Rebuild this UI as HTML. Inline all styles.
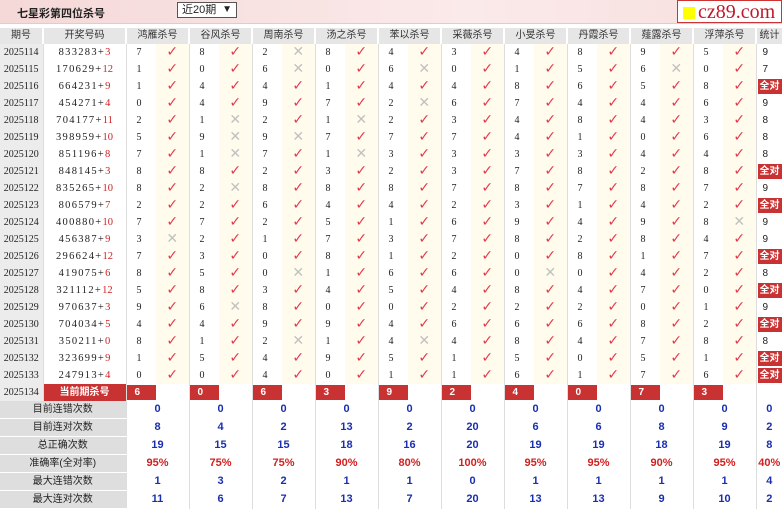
<!DOCTYPE html>
<html><head><meta charset="utf-8"><style>
*{margin:0;padding:0;box-sizing:border-box}
body{width:782px;height:502px;overflow:hidden;background:#fff;font-family:"Liberation Sans","Noto Sans CJK SC",sans-serif;font-size:10px;color:#222;position:relative}
.bar{position:absolute;left:0;top:0;width:782px;height:24px;background:linear-gradient(90deg,#f5d8d8,#fbeaea 60%,#f7dede);border-bottom:1px solid #e8c8c8}
.title{position:absolute;left:17px;top:5px;font-size:11px;font-weight:bold;color:#222}
.sel{position:absolute;left:177px;top:2px;width:60px;height:16px;border:1px solid #555;background:#fff;font-size:11px;padding-left:4px;line-height:14px}
.sel b{position:absolute;right:4px;top:0;font-size:10px}
.logo{position:absolute;left:677px;top:0;width:105px;height:23px;background:#fff;border:1px solid #c33;}
.logo i{position:absolute;left:5px;top:6px;width:12px;height:12px;background:#ff0}
.logo span{position:absolute;left:20px;top:0;font-family:"Liberation Serif",serif;font-size:20px;color:#c0182a;line-height:22px}
table{position:absolute;left:0;top:28px;border-collapse:collapse;table-layout:fixed;width:782px}
td{height:17px;padding:0;white-space:nowrap;overflow:hidden;line-height:17px}
th{height:16px;background:#e6e6e6;font-weight:normal;color:#333;font-size:10px;border-left:2px solid #fff;line-height:16px}
td.p{background:#ececec;font-family:"Liberation Serif",serif;font-size:10px;text-align:center;border-right:1px solid #ddd}
td.d{text-align:center;font-family:"Liberation Serif",serif;font-size:10.5px;letter-spacing:1.3px}
td.d em{font-style:normal;color:#d02020;letter-spacing:0}
td.n{padding-left:10px;border-left:1px solid #ddd;font-family:"Liberation Serif",serif}
td.k,td.x{background:#fffcee;text-align:center;font-family:"DejaVu Sans",sans-serif;font-size:14px}
td.k{color:#e23a4e}
td.x{color:#c0c0c0}
td.s{text-align:left;padding-left:6px;border-left:1px solid #ddd}
.q{display:inline-block;background:#c83232;color:#fff;font-weight:bold;font-size:10px;line-height:15px;padding:0 2px;margin-left:-5px}
td.cur{background:#c83232;color:#fff;font-weight:bold;text-align:center}
td.r{padding:1px 0 1px 0;border-left:1px solid #ddd}
td.r div{background:#c83232;color:#fff;font-weight:bold;height:15px;line-height:15px;padding-left:8px;width:32px}
td.e{border-left:0}
td.l{background:#dedede;text-align:center;border-bottom:1px solid #fff;color:#222}
td.v{text-align:center;color:#1a2fb0;font-weight:bold;font-size:11px;border-left:1px solid #ddd}
td.v.rd{color:#d22020}
</style></head><body>
<div class="bar"><div class="title">七星彩第四位杀号</div><div class="sel">近20期<b>▼</b></div><div class="logo"><i></i><span>cz89.com</span></div></div>
<table>
<colgroup><col style="width:43px"><col style="width:83px">
<col style="width:30px"><col style="width:33px"><col style="width:30px"><col style="width:33px"><col style="width:30px"><col style="width:33px"><col style="width:30px"><col style="width:33px"><col style="width:30px"><col style="width:33px"><col style="width:30px"><col style="width:33px"><col style="width:30px"><col style="width:33px"><col style="width:30px"><col style="width:33px"><col style="width:30px"><col style="width:33px"><col style="width:30px"><col style="width:33px"><col style="width:26px"></colgroup>
<tr><th style="border-left:0">期号</th><th>开奖号码</th><th colspan="2">鸿雁杀号</th><th colspan="2">谷风杀号</th><th colspan="2">周南杀号</th><th colspan="2">汤之杀号</th><th colspan="2">苯以杀号</th><th colspan="2">采薇杀号</th><th colspan="2">小旻杀号</th><th colspan="2">丹霞杀号</th><th colspan="2">薤露杀号</th><th colspan="2">浮萍杀号</th><th>统计</th></tr>
<tr><td class="p">2025114</td><td class="d">833283+<em>3</em></td><td class="n">7</td><td class="k">✓</td><td class="n">8</td><td class="k">✓</td><td class="n">2</td><td class="x">✕</td><td class="n">8</td><td class="k">✓</td><td class="n">4</td><td class="k">✓</td><td class="n">3</td><td class="k">✓</td><td class="n">4</td><td class="k">✓</td><td class="n">8</td><td class="k">✓</td><td class="n">9</td><td class="k">✓</td><td class="n">5</td><td class="k">✓</td><td class="s">9</td></tr>
<tr><td class="p">2025115</td><td class="d">170629+<em>12</em></td><td class="n">1</td><td class="k">✓</td><td class="n">0</td><td class="k">✓</td><td class="n">6</td><td class="x">✕</td><td class="n">0</td><td class="k">✓</td><td class="n">6</td><td class="x">✕</td><td class="n">0</td><td class="k">✓</td><td class="n">1</td><td class="k">✓</td><td class="n">5</td><td class="k">✓</td><td class="n">6</td><td class="x">✕</td><td class="n">0</td><td class="k">✓</td><td class="s">7</td></tr>
<tr><td class="p">2025116</td><td class="d">664231+<em>9</em></td><td class="n">1</td><td class="k">✓</td><td class="n">4</td><td class="k">✓</td><td class="n">4</td><td class="k">✓</td><td class="n">1</td><td class="k">✓</td><td class="n">4</td><td class="k">✓</td><td class="n">4</td><td class="k">✓</td><td class="n">8</td><td class="k">✓</td><td class="n">6</td><td class="k">✓</td><td class="n">5</td><td class="k">✓</td><td class="n">8</td><td class="k">✓</td><td class="s"><span class="q">全对</span></td></tr>
<tr><td class="p">2025117</td><td class="d">454271+<em>4</em></td><td class="n">0</td><td class="k">✓</td><td class="n">4</td><td class="k">✓</td><td class="n">9</td><td class="k">✓</td><td class="n">7</td><td class="k">✓</td><td class="n">2</td><td class="x">✕</td><td class="n">6</td><td class="k">✓</td><td class="n">7</td><td class="k">✓</td><td class="n">4</td><td class="k">✓</td><td class="n">4</td><td class="k">✓</td><td class="n">6</td><td class="k">✓</td><td class="s">9</td></tr>
<tr><td class="p">2025118</td><td class="d">704177+<em>11</em></td><td class="n">2</td><td class="k">✓</td><td class="n">1</td><td class="x">✕</td><td class="n">2</td><td class="k">✓</td><td class="n">1</td><td class="x">✕</td><td class="n">2</td><td class="k">✓</td><td class="n">3</td><td class="k">✓</td><td class="n">4</td><td class="k">✓</td><td class="n">8</td><td class="k">✓</td><td class="n">4</td><td class="k">✓</td><td class="n">3</td><td class="k">✓</td><td class="s">8</td></tr>
<tr><td class="p">2025119</td><td class="d">398959+<em>10</em></td><td class="n">5</td><td class="k">✓</td><td class="n">9</td><td class="x">✕</td><td class="n">9</td><td class="x">✕</td><td class="n">7</td><td class="k">✓</td><td class="n">7</td><td class="k">✓</td><td class="n">7</td><td class="k">✓</td><td class="n">4</td><td class="k">✓</td><td class="n">1</td><td class="k">✓</td><td class="n">0</td><td class="k">✓</td><td class="n">6</td><td class="k">✓</td><td class="s">8</td></tr>
<tr><td class="p">2025120</td><td class="d">851196+<em>8</em></td><td class="n">7</td><td class="k">✓</td><td class="n">1</td><td class="x">✕</td><td class="n">7</td><td class="k">✓</td><td class="n">1</td><td class="x">✕</td><td class="n">3</td><td class="k">✓</td><td class="n">3</td><td class="k">✓</td><td class="n">3</td><td class="k">✓</td><td class="n">3</td><td class="k">✓</td><td class="n">4</td><td class="k">✓</td><td class="n">4</td><td class="k">✓</td><td class="s">8</td></tr>
<tr><td class="p">2025121</td><td class="d">848145+<em>3</em></td><td class="n">8</td><td class="k">✓</td><td class="n">8</td><td class="k">✓</td><td class="n">2</td><td class="k">✓</td><td class="n">3</td><td class="k">✓</td><td class="n">2</td><td class="k">✓</td><td class="n">3</td><td class="k">✓</td><td class="n">7</td><td class="k">✓</td><td class="n">8</td><td class="k">✓</td><td class="n">2</td><td class="k">✓</td><td class="n">8</td><td class="k">✓</td><td class="s"><span class="q">全对</span></td></tr>
<tr><td class="p">2025122</td><td class="d">835265+<em>10</em></td><td class="n">8</td><td class="k">✓</td><td class="n">2</td><td class="x">✕</td><td class="n">8</td><td class="k">✓</td><td class="n">8</td><td class="k">✓</td><td class="n">8</td><td class="k">✓</td><td class="n">7</td><td class="k">✓</td><td class="n">8</td><td class="k">✓</td><td class="n">7</td><td class="k">✓</td><td class="n">8</td><td class="k">✓</td><td class="n">7</td><td class="k">✓</td><td class="s">9</td></tr>
<tr><td class="p">2025123</td><td class="d">806579+<em>7</em></td><td class="n">2</td><td class="k">✓</td><td class="n">2</td><td class="k">✓</td><td class="n">6</td><td class="k">✓</td><td class="n">4</td><td class="k">✓</td><td class="n">4</td><td class="k">✓</td><td class="n">2</td><td class="k">✓</td><td class="n">3</td><td class="k">✓</td><td class="n">1</td><td class="k">✓</td><td class="n">4</td><td class="k">✓</td><td class="n">2</td><td class="k">✓</td><td class="s"><span class="q">全对</span></td></tr>
<tr><td class="p">2025124</td><td class="d">400880+<em>10</em></td><td class="n">7</td><td class="k">✓</td><td class="n">7</td><td class="k">✓</td><td class="n">2</td><td class="k">✓</td><td class="n">5</td><td class="k">✓</td><td class="n">1</td><td class="k">✓</td><td class="n">6</td><td class="k">✓</td><td class="n">9</td><td class="k">✓</td><td class="n">4</td><td class="k">✓</td><td class="n">9</td><td class="k">✓</td><td class="n">8</td><td class="x">✕</td><td class="s">9</td></tr>
<tr><td class="p">2025125</td><td class="d">456387+<em>9</em></td><td class="n">3</td><td class="x">✕</td><td class="n">2</td><td class="k">✓</td><td class="n">1</td><td class="k">✓</td><td class="n">7</td><td class="k">✓</td><td class="n">3</td><td class="k">✓</td><td class="n">7</td><td class="k">✓</td><td class="n">8</td><td class="k">✓</td><td class="n">2</td><td class="k">✓</td><td class="n">8</td><td class="k">✓</td><td class="n">4</td><td class="k">✓</td><td class="s">9</td></tr>
<tr><td class="p">2025126</td><td class="d">296624+<em>12</em></td><td class="n">7</td><td class="k">✓</td><td class="n">3</td><td class="k">✓</td><td class="n">0</td><td class="k">✓</td><td class="n">8</td><td class="k">✓</td><td class="n">1</td><td class="k">✓</td><td class="n">2</td><td class="k">✓</td><td class="n">0</td><td class="k">✓</td><td class="n">8</td><td class="k">✓</td><td class="n">1</td><td class="k">✓</td><td class="n">7</td><td class="k">✓</td><td class="s"><span class="q">全对</span></td></tr>
<tr><td class="p">2025127</td><td class="d">419075+<em>6</em></td><td class="n">8</td><td class="k">✓</td><td class="n">5</td><td class="k">✓</td><td class="n">0</td><td class="x">✕</td><td class="n">1</td><td class="k">✓</td><td class="n">6</td><td class="k">✓</td><td class="n">6</td><td class="k">✓</td><td class="n">0</td><td class="x">✕</td><td class="n">0</td><td class="k">✓</td><td class="n">4</td><td class="k">✓</td><td class="n">2</td><td class="k">✓</td><td class="s">8</td></tr>
<tr><td class="p">2025128</td><td class="d">321112+<em>12</em></td><td class="n">5</td><td class="k">✓</td><td class="n">8</td><td class="k">✓</td><td class="n">3</td><td class="k">✓</td><td class="n">4</td><td class="k">✓</td><td class="n">5</td><td class="k">✓</td><td class="n">4</td><td class="k">✓</td><td class="n">8</td><td class="k">✓</td><td class="n">4</td><td class="k">✓</td><td class="n">7</td><td class="k">✓</td><td class="n">0</td><td class="k">✓</td><td class="s"><span class="q">全对</span></td></tr>
<tr><td class="p">2025129</td><td class="d">970637+<em>3</em></td><td class="n">9</td><td class="k">✓</td><td class="n">6</td><td class="x">✕</td><td class="n">8</td><td class="k">✓</td><td class="n">0</td><td class="k">✓</td><td class="n">0</td><td class="k">✓</td><td class="n">2</td><td class="k">✓</td><td class="n">2</td><td class="k">✓</td><td class="n">2</td><td class="k">✓</td><td class="n">0</td><td class="k">✓</td><td class="n">1</td><td class="k">✓</td><td class="s">9</td></tr>
<tr><td class="p">2025130</td><td class="d">704034+<em>5</em></td><td class="n">4</td><td class="k">✓</td><td class="n">4</td><td class="k">✓</td><td class="n">9</td><td class="k">✓</td><td class="n">9</td><td class="k">✓</td><td class="n">4</td><td class="k">✓</td><td class="n">6</td><td class="k">✓</td><td class="n">6</td><td class="k">✓</td><td class="n">6</td><td class="k">✓</td><td class="n">8</td><td class="k">✓</td><td class="n">2</td><td class="k">✓</td><td class="s"><span class="q">全对</span></td></tr>
<tr><td class="p">2025131</td><td class="d">350211+<em>0</em></td><td class="n">8</td><td class="k">✓</td><td class="n">1</td><td class="k">✓</td><td class="n">2</td><td class="x">✕</td><td class="n">1</td><td class="k">✓</td><td class="n">4</td><td class="x">✕</td><td class="n">4</td><td class="k">✓</td><td class="n">8</td><td class="k">✓</td><td class="n">4</td><td class="k">✓</td><td class="n">7</td><td class="k">✓</td><td class="n">8</td><td class="k">✓</td><td class="s">8</td></tr>
<tr><td class="p">2025132</td><td class="d">323699+<em>9</em></td><td class="n">1</td><td class="k">✓</td><td class="n">5</td><td class="k">✓</td><td class="n">4</td><td class="k">✓</td><td class="n">9</td><td class="k">✓</td><td class="n">5</td><td class="k">✓</td><td class="n">1</td><td class="k">✓</td><td class="n">5</td><td class="k">✓</td><td class="n">0</td><td class="k">✓</td><td class="n">5</td><td class="k">✓</td><td class="n">1</td><td class="k">✓</td><td class="s"><span class="q">全对</span></td></tr>
<tr><td class="p">2025133</td><td class="d">247913+<em>4</em></td><td class="n">0</td><td class="k">✓</td><td class="n">0</td><td class="k">✓</td><td class="n">4</td><td class="k">✓</td><td class="n">0</td><td class="k">✓</td><td class="n">1</td><td class="k">✓</td><td class="n">1</td><td class="k">✓</td><td class="n">6</td><td class="k">✓</td><td class="n">1</td><td class="k">✓</td><td class="n">7</td><td class="k">✓</td><td class="n">6</td><td class="k">✓</td><td class="s"><span class="q">全对</span></td></tr>
<tr><td class="p">2025134</td><td class="cur">当前期杀号</td><td class="r"><div>6</div></td><td class="e"></td><td class="r"><div>0</div></td><td class="e"></td><td class="r"><div>6</div></td><td class="e"></td><td class="r"><div>3</div></td><td class="e"></td><td class="r"><div>9</div></td><td class="e"></td><td class="r"><div>2</div></td><td class="e"></td><td class="r"><div>4</div></td><td class="e"></td><td class="r"><div>0</div></td><td class="e"></td><td class="r"><div>7</div></td><td class="e"></td><td class="r"><div>3</div></td><td class="e"></td><td class="s"></td></tr>
<tr><td class="l" colspan="2">目前连错次数</td><td class="v" colspan="2">0</td><td class="v" colspan="2">0</td><td class="v" colspan="2">0</td><td class="v" colspan="2">0</td><td class="v" colspan="2">0</td><td class="v" colspan="2">0</td><td class="v" colspan="2">0</td><td class="v" colspan="2">0</td><td class="v" colspan="2">0</td><td class="v" colspan="2">0</td><td class="v">0</td></tr>
<tr><td class="l" colspan="2">目前连对次数</td><td class="v" colspan="2">8</td><td class="v" colspan="2">4</td><td class="v" colspan="2">2</td><td class="v" colspan="2">13</td><td class="v" colspan="2">2</td><td class="v" colspan="2">20</td><td class="v" colspan="2">6</td><td class="v" colspan="2">6</td><td class="v" colspan="2">8</td><td class="v" colspan="2">9</td><td class="v">2</td></tr>
<tr><td class="l" colspan="2">总正确次数</td><td class="v" colspan="2">19</td><td class="v" colspan="2">15</td><td class="v" colspan="2">15</td><td class="v" colspan="2">18</td><td class="v" colspan="2">16</td><td class="v" colspan="2">20</td><td class="v" colspan="2">19</td><td class="v" colspan="2">19</td><td class="v" colspan="2">18</td><td class="v" colspan="2">19</td><td class="v">8</td></tr>
<tr><td class="l" colspan="2">准确率(全对率)</td><td class="v rd" colspan="2">95%</td><td class="v rd" colspan="2">75%</td><td class="v rd" colspan="2">75%</td><td class="v rd" colspan="2">90%</td><td class="v rd" colspan="2">80%</td><td class="v rd" colspan="2">100%</td><td class="v rd" colspan="2">95%</td><td class="v rd" colspan="2">95%</td><td class="v rd" colspan="2">90%</td><td class="v rd" colspan="2">95%</td><td class="v rd">40%</td></tr>
<tr><td class="l" colspan="2">最大连错次数</td><td class="v" colspan="2">1</td><td class="v" colspan="2">3</td><td class="v" colspan="2">2</td><td class="v" colspan="2">1</td><td class="v" colspan="2">1</td><td class="v" colspan="2">0</td><td class="v" colspan="2">1</td><td class="v" colspan="2">1</td><td class="v" colspan="2">1</td><td class="v" colspan="2">1</td><td class="v">4</td></tr>
<tr><td class="l" colspan="2">最大连对次数</td><td class="v" colspan="2">11</td><td class="v" colspan="2">6</td><td class="v" colspan="2">7</td><td class="v" colspan="2">13</td><td class="v" colspan="2">7</td><td class="v" colspan="2">20</td><td class="v" colspan="2">13</td><td class="v" colspan="2">13</td><td class="v" colspan="2">9</td><td class="v" colspan="2">10</td><td class="v">2</td></tr>
</table>
</body></html>
